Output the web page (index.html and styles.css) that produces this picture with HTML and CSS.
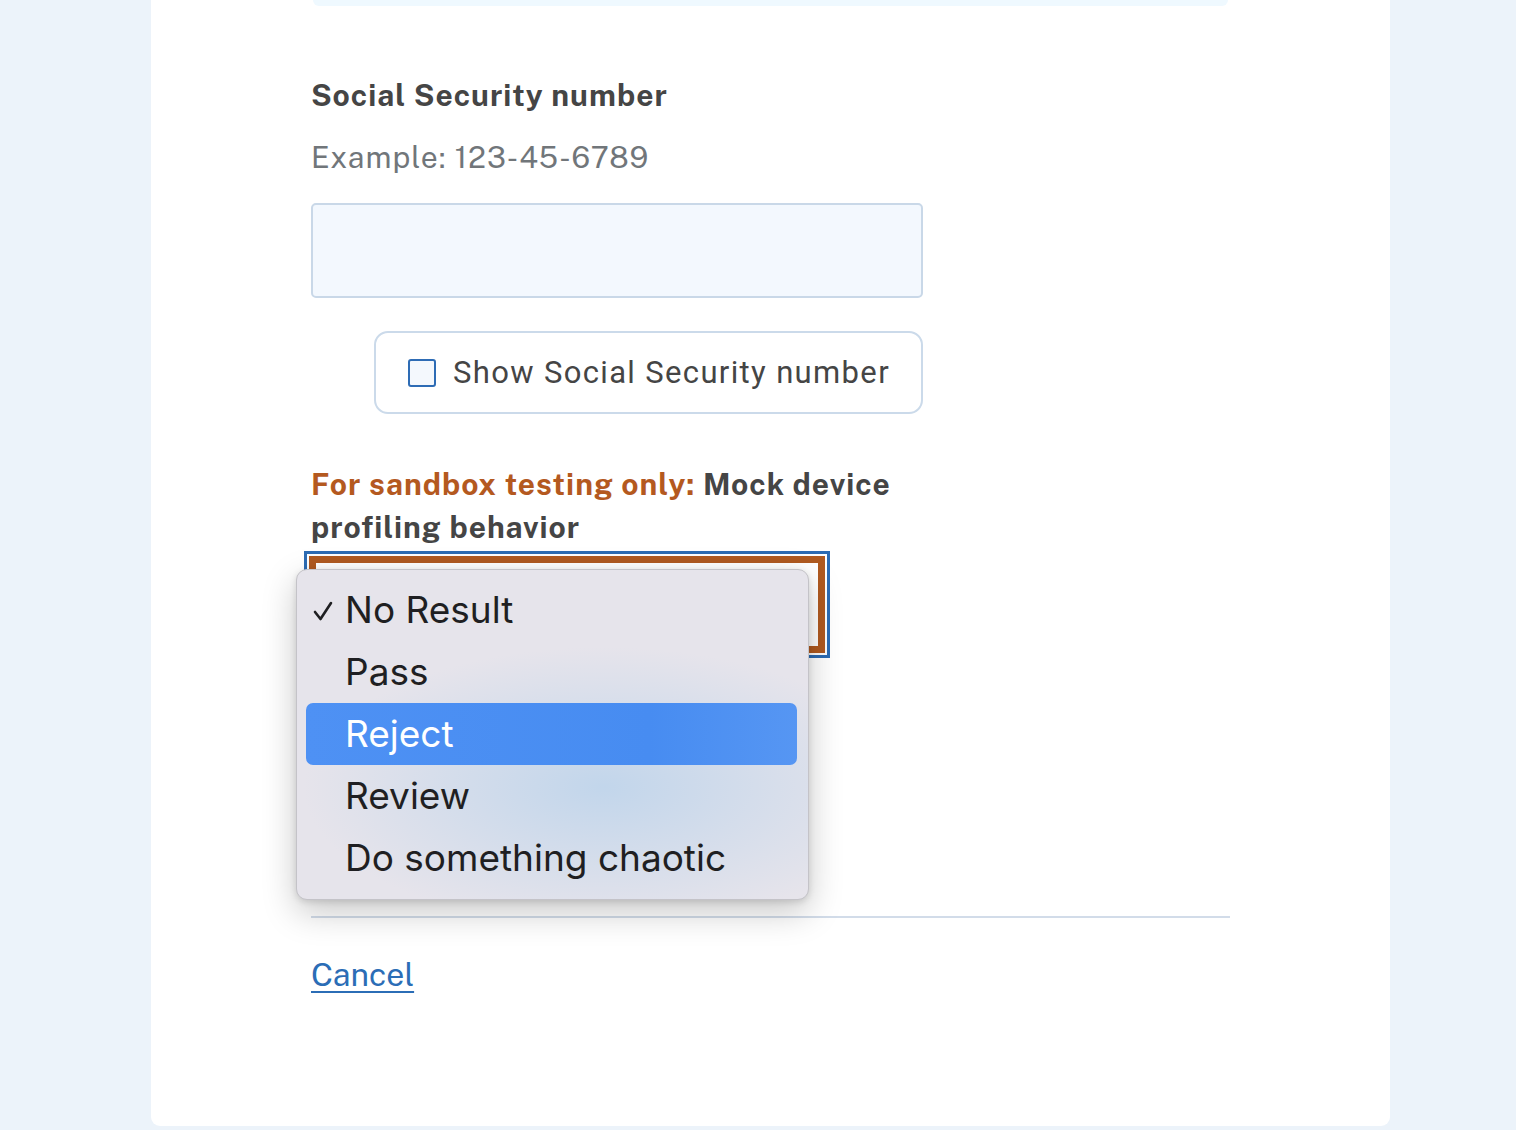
FILE: index.html
```html
<!DOCTYPE html>
<html lang="en">
<head>
<meta charset="utf-8">
<title>Social Security number</title>
<link rel="stylesheet" href="styles.css">
</head>
<body>
<div class="page">
  <main class="card">
    <div class="top-box"></div>
    <div class="field">
      <label class="label" for="ssn">Social Security number</label>
      <div class="hint">Example: 123-45-6789</div>
      <input class="input" id="ssn" type="text">
      <label class="check-card">
        <span class="checkbox"></span>
        <span class="check-text">Show Social Security number</span>
      </label>
    </div>
    <div class="field select-field">
      <div class="legend"><span class="warn">For sandbox testing only:</span> Mock device profiling behavior</div>
      <div class="select-wrap">
        <div class="select"></div>
        <ul class="menu">
          <li class="item"><svg class="tick" viewBox="0 0 20 22" width="20" height="22"><path d="M2 12 L7.5 19 L18 3" fill="none" stroke="#1f1f22" stroke-width="2.6" stroke-linecap="round" stroke-linejoin="round"/></svg>No Result</li>
          <li class="item">Pass</li>
          <li class="item active">Reject</li>
          <li class="item">Review</li>
          <li class="item">Do something chaotic</li>
        </ul>
      </div>
    </div>
    <hr class="rule">
    <a class="cancel" href="#">Cancel</a>
  </main>
</div>
</body>
</html>
```
FILE: styles.css
```css
html, body {
  margin: 0;
  padding: 0;
  background: #ecf3fa;
}
.page {
  padding-left: 151px;
  height: 1130px;
  overflow: hidden;
}
.card {
  width: 1079px;
  height: 1126px;
  background: #ffffff;
  border-radius: 0 0 9px 9px;
  padding-left: 160px;
  box-sizing: content-box;
  font-family: "Public Sans", "Lato", "Noto Sans", sans-serif;
  color: #454545;
}
.top-box {
  margin-left: 2px;
  width: 915px;
  height: 6px;
  background: #eff9ff;
  border-radius: 0 0 12px 12px;
}
.field {
  display: flex;
  flex-direction: column;
  align-items: flex-start;
}
.label {
  margin-top: 69px;
  font-size: 30px;
  font-weight: 700;
  line-height: 40px;
  letter-spacing: 1px;
}
.hint {
  margin-top: 22px;
  font-size: 30px;
  line-height: 40px;
  color: #71767a;
  letter-spacing: 1.05px;
}
.input {
  margin: 26px 0 0 0;
  width: 612px;
  height: 95px;
  box-sizing: border-box;
  background: #f3f8fe;
  border: 2px solid #c9d8e8;
  border-radius: 5px;
}
.check-card {
  margin: 33px 0 0 63px;
  width: 549px;
  height: 83px;
  box-sizing: border-box;
  border: 2px solid #cbdaea;
  border-radius: 14px;
  display: flex;
  align-items: center;
  padding-left: 32px;
  gap: 17px;
}
.checkbox {
  width: 28px;
  height: 28px;
  box-sizing: border-box;
  border: 2px solid #2e6cb5;
  border-radius: 3px;
  background: #f4f8fd;
}
.check-text {
  font-family: "Roboto", "Noto Sans", sans-serif;
  font-size: 31px;
  color: #454545;
  letter-spacing: 1.35px;
}
.select-field {
  margin-top: 49px;
}
.legend {
  font-size: 30px;
  font-weight: 700;
  line-height: 43px;
  width: 610px;
  letter-spacing: 0.98px;
}
.warn {
  color: #b4591f;
}
.select-wrap {
  position: relative;
  margin: 7px 0 0 -2px;
}
.select {
  width: 516px;
  height: 97px;
  box-sizing: border-box;
  border: 7px solid #b05a20;
  background: #ffffff;
  outline: 3px solid #2c6bb3;
  outline-offset: 2px;
}
.menu {
  position: absolute;
  left: -13px;
  top: 13px;
  width: 513px;
  height: 331px;
  box-sizing: border-box;
  margin: 0;
  padding: 9px 11px 0 9px;
  list-style: none;
  border: 1px solid #c4c3c8;
  border-radius: 11px;
  background:
    radial-gradient(ellipse 300px 140px at 60% 66%, rgba(192, 213, 235, 0.95), rgba(192, 213, 235, 0) 100%),
    #e6e4eb;
  box-shadow: 0 12px 34px rgba(0, 0, 0, 0.22), 0 2px 6px rgba(0, 0, 0, 0.12);
  font-family: "Inter", "Roboto", sans-serif;
}
.item {
  position: relative;
  height: 62px;
  line-height: 62px;
  padding-left: 39px;
  font-size: 37px;
  color: #1f1f22;
  border-radius: 7px;
  letter-spacing: 0;
}
.item.active {
  background: linear-gradient(90deg, #4e91f4, #478cf1 70%, #5696f3);
  color: #ffffff;
}
.tick {
  position: absolute;
  left: 7px;
  top: 21px;
}
.rule {
  margin: 263px 0 0 0;
  width: 919px;
  height: 2px;
  border: 0;
  background: #d2dce9;
}
.cancel {
  display: inline-block;
  margin-top: 37px;
  font-size: 32px;
  line-height: 40px;
  color: #2b6db6;
  text-decoration: underline;
  text-decoration-thickness: 2px;
  text-underline-offset: 5px;
}
```
